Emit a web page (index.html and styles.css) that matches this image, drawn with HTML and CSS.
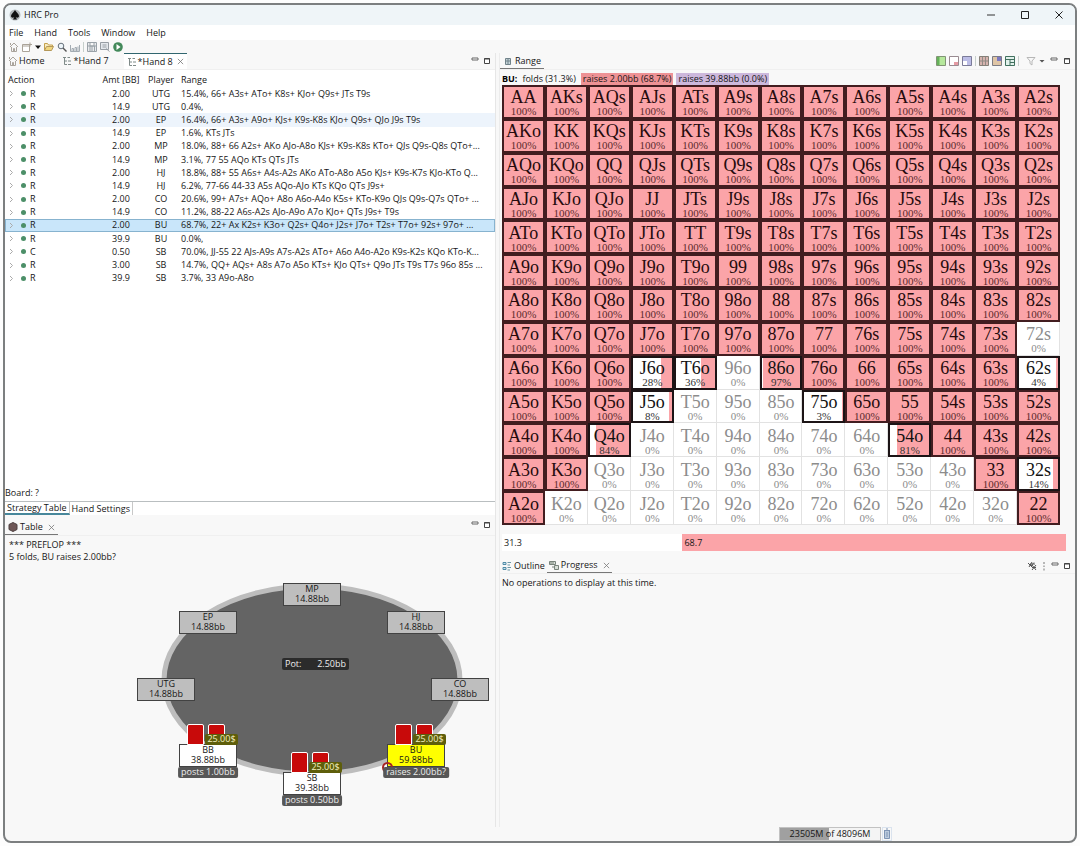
FILE: index.html
```html
<!DOCTYPE html>
<html lang="en">
<head>
<meta charset="utf-8">
<title>HRC Pro</title>
<link rel="stylesheet" href="styles.css">
</head>
<body>
<svg width="0" height="0" class="defs" aria-hidden="true">
  <symbol id="i-home" viewBox="0 0 10 10"><path d="M1 5l4-4 4 4M2.500 5v4.500h5V5M4.500 9V6.500h1V9M1.500 1v2" fill="none" stroke="#aaa49c"/></symbol>
  <symbol id="i-tree" viewBox="0 0 10 10"><path d="M1 1.500h3M2.500 2v6.500H5M2.500 5H5M6 5h3M6 8.500h3M5.500 1.500H8" fill="none" stroke="#7f8a88"/></symbol>
  <symbol id="i-x" viewBox="0 0 8 8"><path d="M1 1l6 6M7 1l-6 6" fill="none" stroke="#777" stroke-width=".9"/></symbol>
  <symbol id="i-min" viewBox="0 0 8 8"><path d="M1 1h6v2H1z" fill="#fff" stroke="#666"/></symbol>
  <symbol id="i-max" viewBox="0 0 8 8"><path d="M1.500 1.500h5v5h-5zM1 2h6" fill="#fff" stroke="#444"/></symbol>
  <symbol id="i-save" viewBox="0 0 10 10"><path d="M.5.500h9v9h-9zM.5 4h9M3 4v5.500M5 4v5.500M7.500 4v5.500M3 .5V4h4V.5" fill="#e8eaec" stroke="#9aa2a8"/></symbol>
</svg>
<div class="window">
  <header class="titlebar">
    <svg class="logo" viewBox="0 0 12 12"><circle cx="6" cy="6" r="5.500" fill="#b4b9bc"/><path d="M6 1c1 2 4 4 4 6 0 1.800-2.300 2.200-3.300 1L8 10.500H4L5.300 8C4.300 9.200 2 8.800 2 7c0-2 3-4 4-6z" fill="#111"/></svg>
    <h1>HRC Pro</h1>
    <div class="winbtns">
      <button aria-label="Minimize"><svg viewBox="0 0 10 10"><path d="M1 5h8" stroke="#333"/></svg></button>
      <button aria-label="Maximize"><svg viewBox="0 0 10 10"><path d="M1.500 1.500h7v7h-7z" fill="none" stroke="#222"/></svg></button>
      <button aria-label="Close"><svg viewBox="0 0 10 10"><path d="M1.500 1.500l7 7M8.500 1.500l-7 7" stroke="#222"/></svg></button>
    </div>
  </header>
  <nav class="menubar">
    <button>File</button><button>Hand</button><button>Tools</button><button>Window</button><button>Help</button>
  </nav>
  <div class="toolbar">
    <button aria-label="Home"><svg><use href="#i-home"/></svg></button>
    <button aria-label="New hand"><svg viewBox="0 0 10 10"><path d="M.5 2.500h7v7h-7zM.5 4h7M8 .5v4M6 2.500h4" fill="#fff" stroke="#aaa398"/></svg></button>
    <button aria-label="New menu" class="narrow"><svg viewBox="0 0 6 10"><path d="M0 3.500h6L3 7z" fill="#111"/></svg></button>
    <button aria-label="Open"><svg viewBox="0 0 10 10"><path d="M.5 8.500v-7h3l1 1.500h4v1.500" fill="#f7ebc0" stroke="#c4a04c"/><path d="M.5 8.500l2-4h7l-2 4z" fill="#f0d67e" stroke="#b4985a"/></svg></button>
    <button aria-label="Search"><svg viewBox="0 0 10 10"><circle cx="4" cy="4" r="2.800" fill="#edf4f8" stroke="#66707a"/><path d="M6 6l3.500 3.500" stroke="#555" stroke-width="1.400"/></svg></button>
    <button aria-label="Statistics"><svg viewBox="0 0 10 10"><path d="M.5 3v6.500h9V3M2 9V6.500h1.500V9M5 9V5.500h1.500V9M8 9V4.500" fill="none" stroke="#a3abb2"/></svg></button>
    <i class="sep"></i>
    <button aria-label="Save"><svg><use href="#i-save"/></svg></button>
    <button aria-label="Save as"><svg viewBox="0 0 10 10"><path d="M.5.500h8v7h-8zM2.500 3h4M2.500 5h4M6 6.500l3.500 3" fill="#e4e8ec" stroke="#979da3"/></svg></button>
    <button aria-label="Run"><svg viewBox="0 0 10 10"><circle cx="5" cy="5" r="4.800" fill="#43895a"/><path d="M3.500 2l4 3-4 3z" fill="#fff"/></svg></button>
  </div>
  <main class="workbench">
    <div class="column left">
      <section class="pane editor">
        <div class="tabs">
          <button class="tab"><svg><use href="#i-home"/></svg>Home</button>
          <button class="tab"><svg><use href="#i-tree"/></svg>*Hand 7</button>
          <button class="tab current"><svg><use href="#i-tree"/></svg>*Hand 8<svg class="x"><use href="#i-x"/></svg></button>
          <div class="tools"><button aria-label="Minimize"><svg><use href="#i-min"/></svg></button><button aria-label="Maximize"><svg><use href="#i-max"/></svg></button></div>
        </div>
        <div class="sheet">
          <table class="strategy">
            <colgroup><col class="c-act"><col class="c-amt"><col class="c-ply"><col></colgroup>
            <thead><tr><th>Action</th><th>Amt [BB]</th><th>Player</th><th>Range</th></tr></thead>
            <tbody id="actions"></tbody>
          </table>
          <p class="board">Board: ?</p>
        </div>
        <div class="subtabs"><button class="on">Strategy Table</button><button>Hand Settings</button></div>
      </section>
      <section class="pane lower">
        <div class="tabs">
          <button class="tab under"><svg viewBox="0 0 10 10"><path d="M5 .5L9 2.500v5L5 9.500 1 7.500v-5z" fill="#6e5656" stroke="#4d4040"/></svg>Table<svg class="x"><use href="#i-x"/></svg></button>
          <div class="tools"><button aria-label="Minimize"><svg><use href="#i-min"/></svg></button><button aria-label="Maximize"><svg><use href="#i-max"/></svg></button></div>
        </div>
        <p class="log">*** PREFLOP ***<br>5 folds, BU raises 2.00bb?</p>
        <div class="stage">
          <svg class="felt" viewBox="0 0 352 230"><ellipse cx="175" cy="100" rx="148" ry="94" fill="#646464" stroke="#bdbdbd" stroke-width="5"/></svg>
          <div class="pot"><span>Pot:</span><span>2.50bb</span></div>
          <div class="seat mp">MP<br>14.88bb</div>
          <div class="seat ep">EP<br>14.88bb</div>
          <div class="seat hj">HJ<br>14.88bb</div>
          <div class="seat utg">UTG<br>14.88bb</div>
          <div class="seat co">CO<br>14.88bb</div>
          <div class="seat live bb"><i class="card one"></i><i class="card two"></i><b class="bounty">25.00$</b>BB<br>38.88bb<span class="move">posts 1.00bb</span></div>
          <div class="seat live sb"><i class="card one"></i><i class="card two"></i><b class="bounty">25.00$</b>SB<br>39.38bb<span class="move">posts 0.50bb</span></div>
          <div class="seat live bu"><i class="dealer"></i><i class="card one"></i><i class="card two"></i><b class="bounty">25.00$</b>BU<br>59.88bb<span class="move">raises 2.00bb?</span></div>
        </div>
      </section>
    </div>
    <div class="column right">
      <section class="pane range">
        <div class="tabs">
          <button class="tab under"><svg viewBox="0 0 10 10"><path d="M2.500 2.500h5v6h-5zM2.500 5h5M5 2.500v6" fill="#c5d3d8" stroke="#71838a"/></svg>Range</button>
          <div class="tools">
            <button aria-label="Green view"><svg viewBox="0 0 10 10"><path d="M.5.500h9v9h-9z" fill="#b6e89c" stroke="#819475"/><path d="M1 1h2.500v8H1z" fill="#65b25a"/></svg></button>
            <button aria-label="Red view"><svg viewBox="0 0 10 10"><path d="M.5.500h9v9h-9z" fill="#fff" stroke="#998b91"/><path d="M5 6h4v3H5z" fill="#e59aa3"/></svg></button>
            <button aria-label="Blue view"><svg viewBox="0 0 10 10"><path d="M.5.500h9v9h-9z" fill="#bcbde6" stroke="#7b7b98"/><path d="M1 5h4v4H1z" fill="#fff"/></svg></button>
            <i class="sep"></i>
            <button aria-label="Columns view"><svg viewBox="0 0 10 10"><path d="M.5.500h9v9h-9z" fill="#d6b3ae" stroke="#858078"/><path d="M3.500 1v8M6.500 1v8M1 5h8" stroke="#918b85"/></svg></button>
            <button aria-label="Mixed view"><svg viewBox="0 0 10 10"><path d="M.5.500h9v9h-9z" fill="#dfc5a6" stroke="#7c7c84"/><path d="M5 1h4v4H5z" fill="#7b78bf"/></svg></button>
            <button aria-label="Grid view" class="pressed"><svg viewBox="0 0 10 10"><path d="M.5.500h9v9h-9zM.5 3.500h9M5 3.500v6M5 6.500h4.500" fill="#e1f1eb" stroke="#42705f"/></svg></button>
            <i class="sep"></i>
            <button aria-label="Filter" class="filter"><svg viewBox="0 0 10 10"><path d="M1 1.500h8L6 5v4L4 7.500V5z" fill="#f8f8f8" stroke="#b7b7b7"/></svg></button>
            <button aria-label="View menu" class="narrow"><svg viewBox="0 0 6 10"><path d="M.5 4h5L3 6.500z" fill="#555"/></svg></button>
            <button aria-label="Minimize"><svg><use href="#i-min"/></svg></button><button aria-label="Maximize"><svg><use href="#i-max"/></svg></button>
          </div>
        </div>
        <p class="legend"><b>BU:</b><span>folds (31.3%)</span><span class="r1">raises 2.00bb (68.7%)</span><span class="r2">raises 39.88bb (0.0%)</span></p>
        <div class="matrix" id="matrix"></div>
        <div class="split"><span class="fold">31.3</span><span class="raise">68.7</span></div>
      </section>
      <section class="pane lower">
        <div class="tabs">
          <button class="tab"><svg viewBox="0 0 10 10"><path d="M1 1.500h3v2H1zM1 6.500h3v2H1z" fill="#cde4f0" stroke="#4f8ba6"/><path d="M5.500 1.500H9M5.500 4H8M5.500 6.500H9M5.500 9H8" stroke="#6b97a6"/></svg>Outline</button>
          <button class="tab under"><svg viewBox="0 0 10 10"><path d="M.5 1.500h6v3h-6zM5.500 5.500h4v4h-4zM2 1v3M4 1v3M3 7h2" fill="#d8dfd8" stroke="#78837b"/></svg>Progress<svg class="x"><use href="#i-x"/></svg></button>
          <div class="tools">
            <button aria-label="Clear finished"><svg viewBox="0 0 10 10"><path d="M1 2l5 5M5 1L2 6M7 1.500L4 5M3 3h5M5 4l4 5M9 4L5 9M5 6.500h4" fill="none" stroke="#555"/></svg></button>
            <button aria-label="View menu" class="narrow"><svg viewBox="0 0 6 10"><path d="M3 1v2M3 4.500v1.500M3 7.500v2" stroke="#777"/></svg></button>
            <button aria-label="Minimize"><svg><use href="#i-min"/></svg></button><button aria-label="Maximize"><svg><use href="#i-max"/></svg></button>
          </div>
        </div>
        <p class="empty">No operations to display at this time.</p>
      </section>
    </div>
  </main>
  <footer class="status">
    <div class="heap">23505M of 48096M</div>
    <button aria-label="Collect garbage"><svg viewBox="0 0 8 12"><path d="M1.500 2.500h5v8h-5zM1 2.500h6M3 1h2M4 4v5" fill="#bccbdd" stroke="#7f95b4"/></svg></button>
  </footer>
</div>
<script src="app.js"></script>
</body>
</html>
```
FILE: styles.css
```css
* { box-sizing: border-box; }
body { margin: 0; padding: 3px; background: #fdfdfd; font: 9px/12px "Open Sans", "Noto Sans", sans-serif; color: #161616; }
h1, p { margin: 0; font-size: inherit; font-weight: normal; }
button { display: flex; align-items: center; margin: 0; padding: 0; border: 0; background: none; font: inherit; color: inherit; white-space: nowrap; }
svg { display: block; width: 10px; height: 10px; flex: none; }
.defs { position: absolute; width: 0; height: 0; }
.window { display: flex; flex-direction: column; min-height: calc(100vh - 6px); border: 2px solid #7c7f80; border-radius: 8px; overflow: hidden; background: #f8f8f8; }
.titlebar { display: flex; align-items: center; gap: 3px; height: 20px; padding: 0 6px 0 4px; background: #eff5f8; }
.titlebar .logo { width: 12px; height: 12px; }
.winbtns { display: flex; gap: 24px; margin-left: auto; padding-right: 5px; }
.menubar { display: flex; gap: 11px; height: 15px; padding-left: 4px; background: #fff; }
.toolbar { display: flex; align-items: center; gap: 3px; height: 13px; padding-left: 4px; }
.narrow svg { width: 6px; }
.sep { width: 1px; height: 10px; background: #c6cfcb; }
.workbench { flex: 1; display: grid; grid-template-columns: 491fr 576fr; gap: 3px; }
.column { display: grid; min-width: 0; }
.left { grid-template-rows: 462fr 309fr; gap: 3px; border-right: 1px solid #e6e6e6; }
.right { grid-template-rows: 503fr 269fr; gap: 2px; border-left: 1px solid #ececec; }
.pane { display: flex; flex-direction: column; min-width: 0; }
.tabs { display: flex; height: 17px; border-bottom: 1px solid #f0f0f0; }
.lower .tabs { height: 16px; }
.left .lower .tabs { height: 18px; }
.left .lower .tab { padding-top: 2px; }
.tab { gap: 2px; padding: 0 3px; }
.editor .tab { gap: 1px; padding: 0 9px 0 3px; margin-right: 6px; }
.editor .tab.current { padding-right: 3px; background: #fff; border-top: 1px solid #31666f; }
.tab .x { width: 7px; height: 7px; margin-left: 3px; }
.tab.under { border-bottom: 1px solid #777; }
.tools { display: flex; align-items: center; gap: 4px; margin-left: auto; padding-right: 4px; }
.left .lower .tools { align-items: flex-start; padding-top: 3px; }
.tools [aria-label="Minimize"] svg, .tools [aria-label="Maximize"] svg { width: 8px; height: 8px; }
.range .tools { gap: 3px; }
.filter { margin-left: 4px; }
.range .tools [aria-label="Maximize"], .range .tools .narrow + button { margin-left: 2px; }
.pressed { background: #bfe2d8; }
.sheet { flex: 1; display: flex; flex-direction: column; justify-content: space-between; padding-top: 3px; background: #fff; }
.strategy { width: 100%; height: 212px; table-layout: fixed; border-collapse: collapse; }
.strategy thead { height: 14px; }
.c-act { width: 93px; }
.c-amt { width: 46px; }
.c-ply { width: 34px; }
.strategy th, .strategy td { padding: 0 3px; font-weight: normal; text-align: center; white-space: nowrap; }
.strategy th:nth-child(2), .strategy th:nth-child(3) { padding: 0; }
.strategy th:first-child, .strategy th:last-child, .strategy td:last-child, .strategy td:first-child { text-align: left; }
.strategy td:last-child { padding-right: 0; }
.strategy .hover { background: #edf4fc; }
.strategy .selected { background: #c9e6fa; outline: 1px solid #87b3cf; outline-offset: -1px; }
.act { display: flex; align-items: center; }
.act svg { width: 5px; height: 7px; margin: 0 7px 0 1px; }
.act i { width: 5px; height: 5px; margin-right: 4px; border-radius: 50%; background: #4c8f68; }
.board { height: 14px; }
.subtabs { display: flex; height: 14px; border-top: 1px solid #b9bec0; background: #fff; }
.subtabs button { padding: 0 2px; border-right: 1px solid #c8c8c8; }
.subtabs .on { border-bottom: 2px solid #47879b; }
.log { padding: 3px 4px 0; }
.stage { position: relative; width: 352px; height: 230px; margin: 17px 0 0 132px; line-height: 10px; }
.felt { width: 352px; height: 230px; }
.seat { position: absolute; width: 58px; height: 23px; border: 1px solid #424242; background: #bebebe; text-align: center; }
.live { background: #fff; }
.mp { left: 146px; top: 3px; } .ep { left: 42px; top: 31px; } .hj { left: 250px; top: 31px; }
.utg { left: 0; top: 98px; } .co { left: 294px; top: 98px; }
.bb { left: 42px; top: 164px; } .sb { left: 146px; top: 192px; }
.bu { left: 250px; top: 164px; background: #ff0; }
.pot { position: absolute; left: 145px; top: 78px; display: flex; justify-content: space-between; width: 67px; height: 12px; padding: 1px 3px; border-radius: 2px; background: #2b2b2b; color: #eee; }
.card { position: absolute; top: -21px; width: 17px; height: 21px; border: 1px solid #fff; border-radius: 2px 2px 0 0; background: #c80a0a; }
.one { left: 7px; } .two { left: 28px; height: 12px; }
.bounty { position: absolute; left: 25px; top: -11px; width: 33px; height: 11px; border-radius: 2px; background: #5e5e0b; color: #f3f1c0; font-weight: normal; }
.move { position: absolute; left: 50%; top: 22px; transform: translateX(-50%); padding: 0 3px; height: 11px; border-radius: 2px; background: #575757; color: #eee; white-space: nowrap; }
.dealer { position: absolute; left: -6px; top: 17px; width: 11px; height: 11px; border: 2px solid #a72323; border-radius: 50%; }
.legend { display: flex; gap: 3px; margin: 2px 0 0 2px; height: 13px; align-items: center; }
.legend b { color: #000; }
.legend span { padding: 0 2px; }
.legend .r1 { background: #ee9295; }
.legend .r2 { background: #ccb8dc; }
.matrix { display: grid; grid-template: repeat(13, 1fr) / repeat(13, 1fr); height: 440px; margin: 0 15px 0 2px; background: #fff; }
.hand { display: flex; flex-direction: column; align-items: center; justify-content: center; min-width: 0; padding-top: 1px; border: 2px solid #421d20; background: linear-gradient(to right, #fff var(--fold), #fba4a8 var(--fold)); font: 18px/18px "Liberation Serif", serif; color: #260b0d; }
.hand small { font-size: 11px; line-height: 10px; color: #5c2a2d; }
.hand.mixed { border-color: #1c1416; color: #111; }
.hand.mixed small { color: #333; }
.hand.none { border: 1px solid #e2e2e2; border-width: 0 1px 1px 0; padding: 3px 1px 1px 2px; background: #fff; color: #8c8c8c; }
.hand.none small { color: #8c8c8c; }
.split { display: flex; height: 17px; margin: 9px 9px 0 2px; line-height: 17px; }
.split span { padding-left: 2px; }
.fold { width: 32%; background: #fff; }
.raise { flex: 1; background: #fba4a8; }
.right .lower .tab { padding: 0 2px; }
.empty { padding: 3px 2px; }
.status { display: flex; justify-content: flex-end; gap: 1px; height: 14px; padding-right: 183px; }
.heap { width: 102px; border: 1px solid #c2c2c2; background: linear-gradient(to right, #a0a0a0 49%, #f4f4f4 49%); text-align: center; }
.status button { border: 1px solid #dae3ee; }
.status svg { width: 8px; height: 12px; }
```
FILE: app.js
```js
const actions = [
  ["R", "2.00", "UTG", "15.4%, 66+ A3s+ ATo+ K8s+ KJo+ Q9s+ JTs T9s"],
  ["R", "14.9", "UTG", "0.4%,"],
  ["R", "2.00", "EP", "16.4%, 66+ A3s+ A9o+ KJs+ K9s-K8s KJo+ Q9s+ QJo J9s T9s", "hover"],
  ["R", "14.9", "EP", "1.6%, KTs JTs"],
  ["R", "2.00", "MP", "18.0%, 88+ 66 A2s+ AKo AJo-A8o KJs+ K9s-K8s KTo+ QJs Q9s-Q8s QTo+..."],
  ["R", "14.9", "MP", "3.1%, 77 55 AQo KTs QTs JTs"],
  ["R", "2.00", "HJ", "18.8%, 88+ 55 A6s+ A4s-A2s AKo ATo-A8o A5o KJs+ K9s-K7s KJo-KTo Q..."],
  ["R", "14.9", "HJ", "6.2%, 77-66 44-33 A5s AQo-AJo KTs KQo QTs J9s+"],
  ["R", "2.00", "CO", "20.6%, 99+ A7s+ AQo+ A8o A6o-A4o K5s+ KTo-K9o QJs Q9s-Q7s QTo+ ..."],
  ["R", "14.9", "CO", "11.2%, 88-22 A6s-A2s AJo-A9o A7o KJo+ QTs J9s+ T9s"],
  ["R", "2.00", "BU", "68.7%, 22+ Ax K2s+ K3o+ Q2s+ Q4o+ J2s+ J7o+ T2s+ T7o+ 92s+ 97o+ ...", "selected"],
  ["R", "39.9", "BU", "0.0%,"],
  ["C", "0.50", "SB", "70.0%, JJ-55 22 AJs-A9s A7s-A2s ATo+ A6o A4o-A2o K9s-K2s KQo KTo-K..."],
  ["R", "3.00", "SB", "14.7%, QQ+ AQs+ A8s A7o A5o KTs+ KJo QTs+ Q9o JTs T9s T7s 96o 85s ..."],
  ["R", "39.9", "SB", "3.7%, 33 A9o-A8o"]
];
const arrow = '<svg viewBox="0 0 5 7"><path d="M1 1l2.500 2.500L1 6" fill="none" stroke="#aaa"/></svg>';
document.getElementById("actions").innerHTML = actions.map(([a, amt, p, range, cls = ""]) =>
  `<tr class="${cls}"><td><div class="act">${arrow}<i></i>${a}</div></td><td>${amt}</td><td>${p}</td><td>${range}</td></tr>`
).join("");

const ranks = "AKQJT98765432";
const partial = { J6o: 28, T6o: 36, "86o": 97, "62s": 4, J5o: 8, "75o": 3, Q4o: 84, "54o": 81, "32s": 14 };
const folded = new Set("72s 96o T5o 95o 85o J4o T4o 94o 84o 74o 64o Q3o J3o T3o 93o 83o 73o 63o 53o 43o K2o Q2o J2o T2o 92o 82o 72o 62o 52o 42o 32o".split(" "));
let cells = "";
for (let r = 0; r < 13; r++) {
  for (let c = 0; c < 13; c++) {
    const name = r === c ? ranks[r] + ranks[r] : c > r ? ranks[r] + ranks[c] + "s" : ranks[c] + ranks[r] + "o";
    const pct = folded.has(name) ? 0 : partial[name] ?? 100;
    const cls = pct === 0 ? "none" : pct < 100 ? "mixed" : "";
    cells += `<div class="hand ${cls}" style="--fold:${100 - pct}%">${name}<small>${pct}%</small></div>`;
  }
}
document.getElementById("matrix").innerHTML = cells;
```
